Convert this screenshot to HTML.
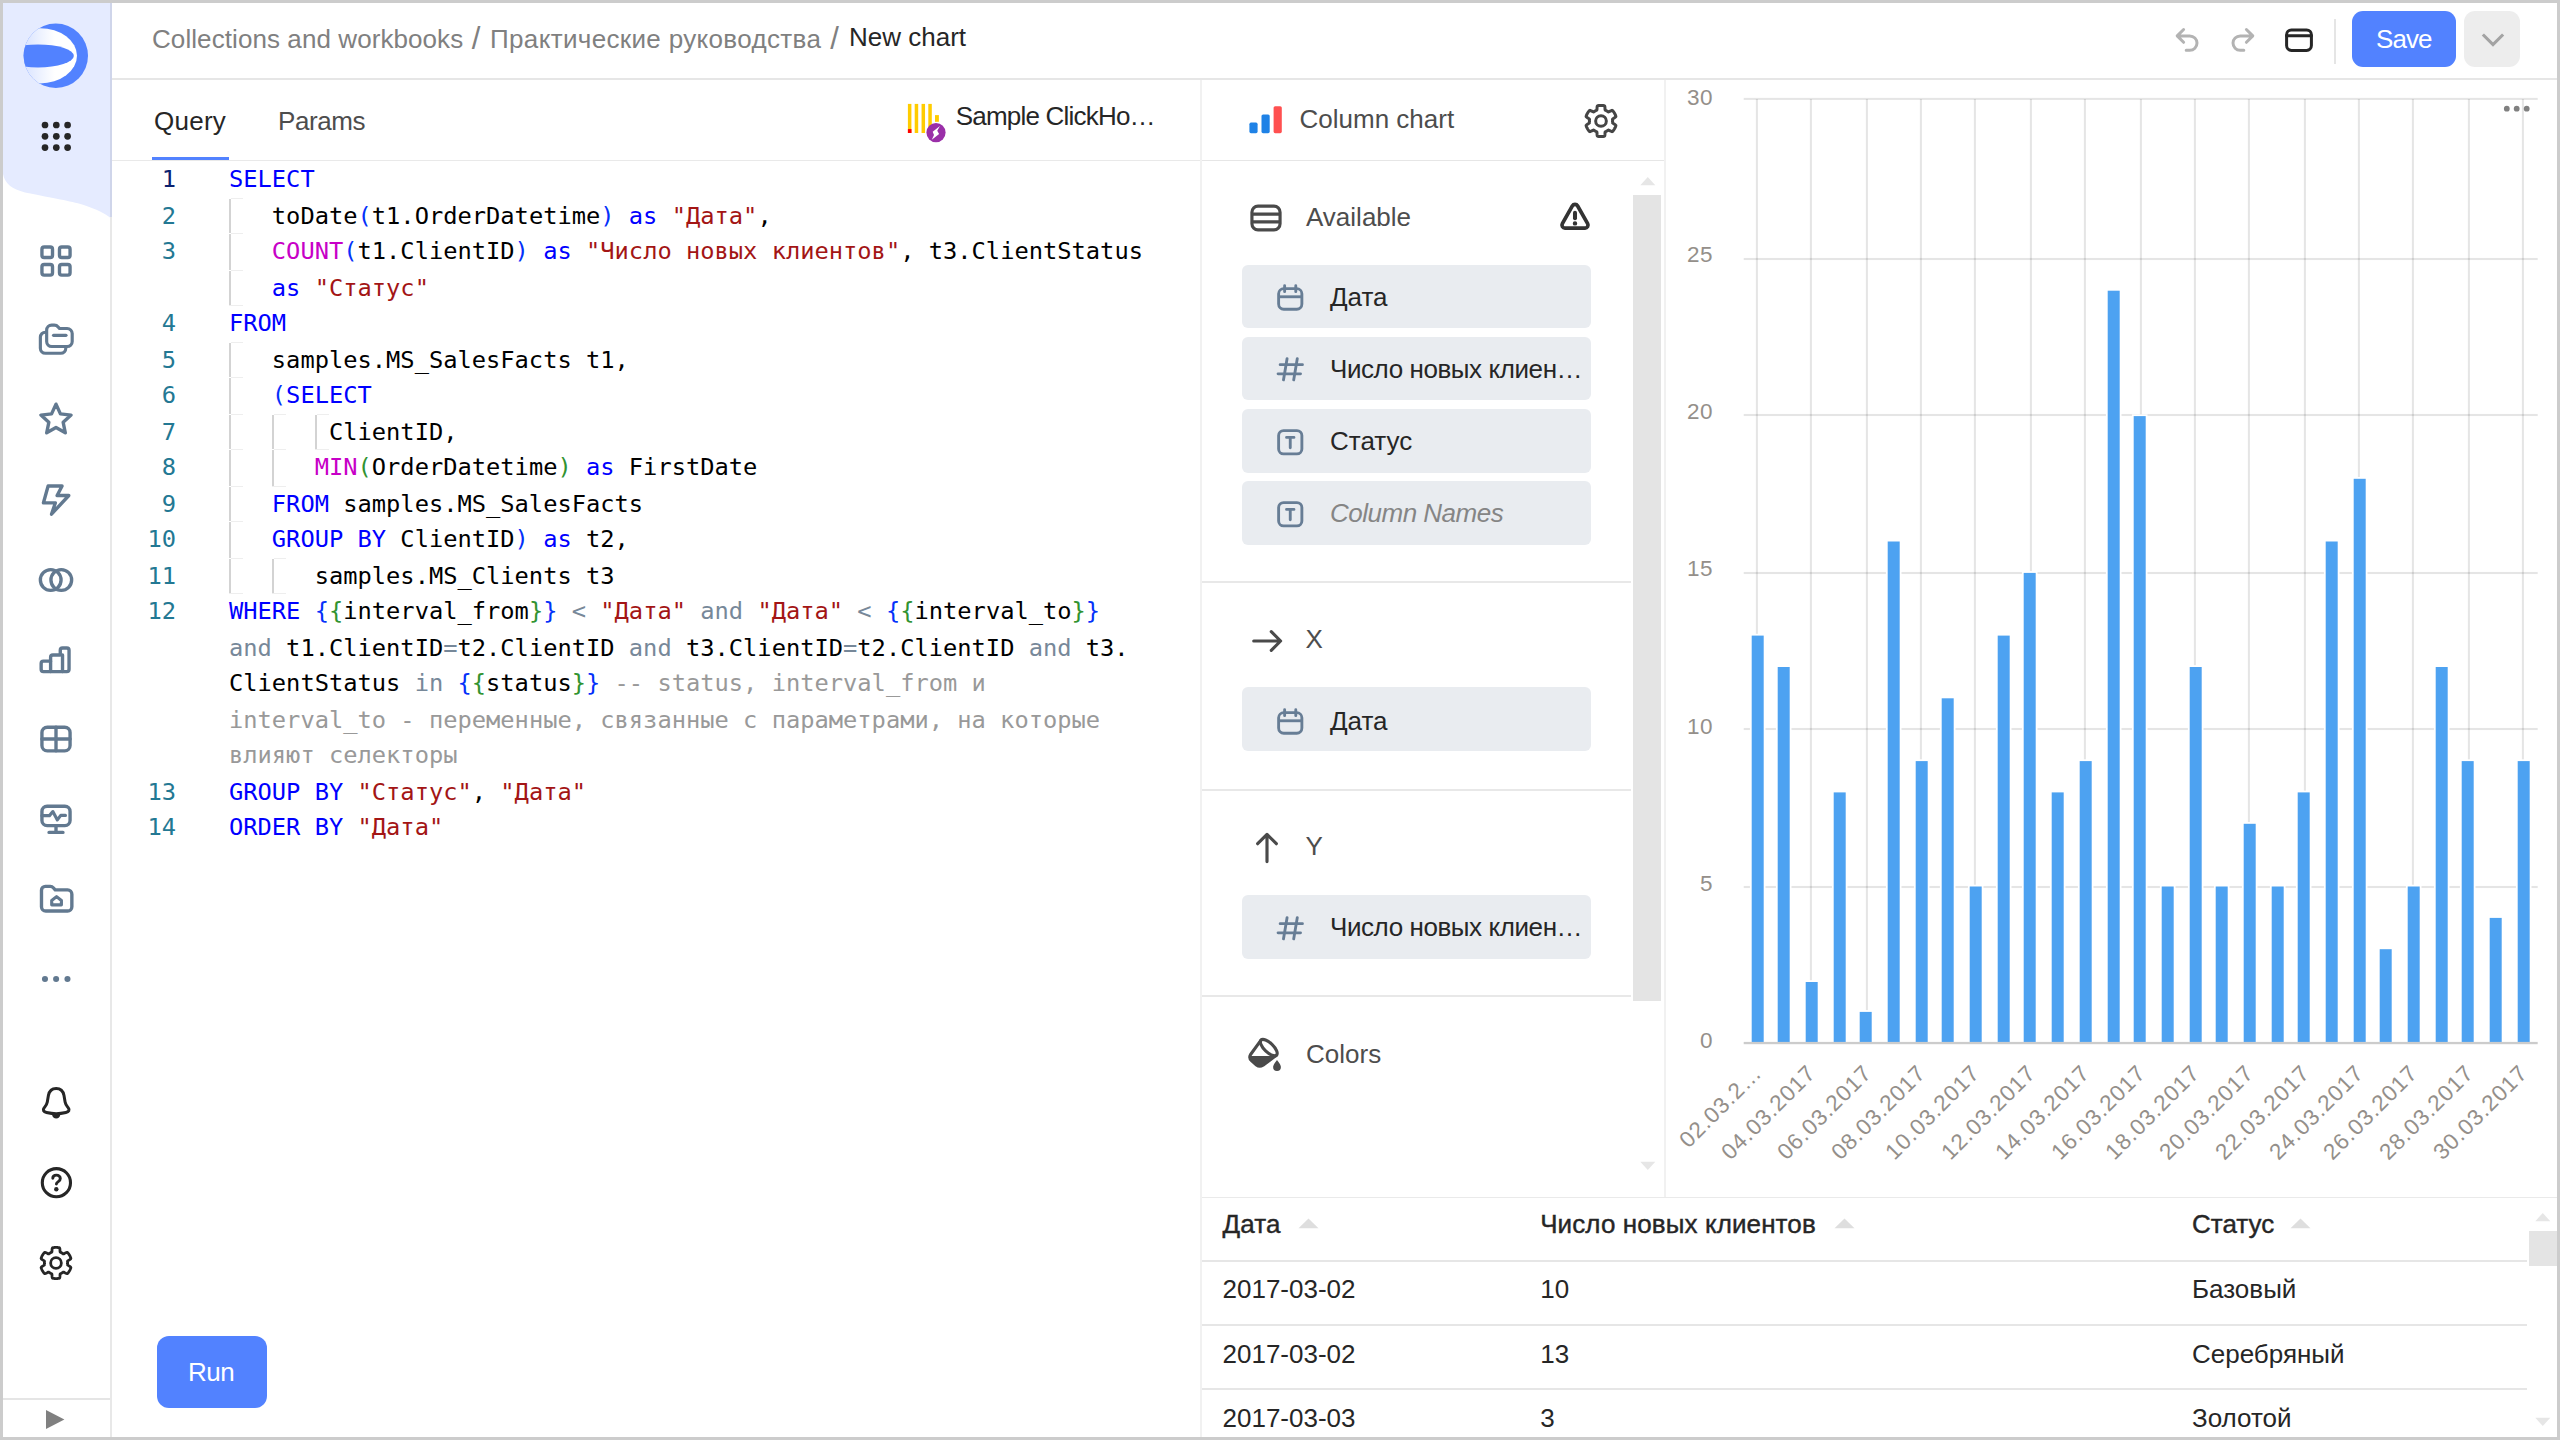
<!DOCTYPE html>
<html lang="ru"><head><meta charset="utf-8"><title>New chart</title>
<style>
html,body{margin:0;padding:0;}
body{width:2560px;height:1440px;overflow:hidden;background:#ccc;position:relative;font-family:"Liberation Sans", sans-serif;}
#app{position:absolute;left:3px;top:3px;width:2554px;height:1434px;background:#fff;overflow:hidden;}
#root{position:absolute;left:-3px;top:-3px;width:2560px;height:1440px;}
.t{position:absolute;white-space:pre;line-height:1;}
.b{position:absolute;}
.code{position:absolute;white-space:pre;font-family:"DejaVu Sans Mono", "Liberation Mono", monospace;font-size:23.72px;line-height:36px;height:36px;color:#000;}
.k{color:#0000ff}.s{color:#a31515}.f{color:#c700c7}.o{color:#778899}.c{color:#999999}.b1{color:#0431fa}.b2{color:#319331}
.ln{position:absolute;font-family:"DejaVu Sans Mono", "Liberation Mono", monospace;font-size:23.72px;line-height:36px;height:36px;color:#237893;text-align:right;width:60px;left:116px;}
.ig{position:absolute;width:1.9px;background:#d3d3d3;}
</style></head><body><div id="app"><div id="root">
<svg class="b" style="left:0;top:0" width="115" height="240" viewBox="0 0 115 240"><path d="M3,3 H112 V219 C105,213.5 97,209.5 83,204.8 C70,200.800 55,198.500 25,192.500 C12,189 5,184 3,174 Z" fill="#e5ebff"/><path d="M110,3 H112 V219 C111.3,218.5 110.700,218 110,217.500 Z" fill="#cfd5ea"/></svg>
<div class="b" style="left:110px;top:217px;width:2px;height:1220px;background:#e8e8e8;"></div>
<svg class="b" style="left:20px;top:20px" width="72" height="72" viewBox="20 20 72 72"><defs><linearGradient id="lg" x1="0" x2="1" y1="0" y2="0"><stop offset="0.25" stop-color="#d6e1ff"/><stop offset="0.7" stop-color="#ffffff"/></linearGradient><clipPath id="lc"><circle cx="55.8" cy="55.8" r="32.2"/></clipPath></defs><circle cx="55.8" cy="55.8" r="32.2" fill="#5282ff"/><g clip-path="url(#lc)"><ellipse cx="40" cy="55.8" rx="37" ry="27.6" fill="url(#lg)"/><ellipse cx="38" cy="55.9" rx="35.8" ry="11.5" fill="#5282ff"/></g></svg>
<svg class="b" style="left:30px;top:110px" width="52" height="52" viewBox="30 110 52 52" fill="#262626"><circle cx="45.0" cy="125.0" r="3.35"/><circle cx="45.0" cy="136.3" r="3.35"/><circle cx="45.0" cy="147.6" r="3.35"/><circle cx="56.3" cy="125.0" r="3.35"/><circle cx="56.3" cy="136.3" r="3.35"/><circle cx="56.3" cy="147.6" r="3.35"/><circle cx="67.6" cy="125.0" r="3.35"/><circle cx="67.6" cy="136.3" r="3.35"/><circle cx="67.6" cy="147.6" r="3.35"/></svg>
<svg class="b" style="left:38.0px;top:242.5px" width="36" height="36" viewBox="0 0 16 16" fill="none" stroke="#627990" stroke-width="1.5" stroke-linecap="round" stroke-linejoin="round"><rect x="1.75" y="1.75" width="4.7" height="4.7" rx="1"/><rect x="9.55" y="1.75" width="4.7" height="4.7" rx="1"/><rect x="1.75" y="9.55" width="4.7" height="4.7" rx="1"/><rect x="9.55" y="9.55" width="4.7" height="4.7" rx="1"/></svg>
<svg class="b" style="left:38.0px;top:322.3px" width="36" height="36" viewBox="0 0 16 16" fill="none" stroke="#627990" stroke-width="1.4" stroke-linecap="round" stroke-linejoin="round"><path d="M3.85 4.6V3.6a2.2 2.2 0 0 1 2.2-2.2h1.2a2.2 2.2 0 0 1 1.7.8l.6.7h3.4a2.25 2.25 0 0 1 2.25 2.25v3.5a2.25 2.25 0 0 1-2.25 2.25H6.1a2.25 2.25 0 0 1-2.25-2.25Z"/><path d="M3.7 4.55H3.3a2.25 2.25 0 0 0-2.25 2.25v4.85a2.25 2.25 0 0 0 2.25 2.25h6.8a2.25 2.25 0 0 0 2.25-2.25V11"/><path d="M6.9 5.92H12.45"/></svg>
<svg class="b" style="left:38.0px;top:402.1px" width="36" height="36" viewBox="0 0 16 16" fill="none" stroke="#627990" stroke-width="1.5" stroke-linecap="round" stroke-linejoin="round"><polygon points="8.00,0.95 9.97,5.29 14.70,5.82 11.19,9.04 12.14,13.70 8.00,11.35 3.86,13.70 4.81,9.04 1.30,5.82 6.03,5.29"/></svg>
<svg class="b" style="left:38.0px;top:481.9px" width="36" height="36" viewBox="0 0 16 16" fill="none" stroke="#627990" stroke-width="1.5" stroke-linecap="round" stroke-linejoin="round"><path d="M4.5 1.75h6.2L8.5 6h5.2L6 14.3l1.7-5H2.4Z"/></svg>
<svg class="b" style="left:38.0px;top:561.7px" width="36" height="36" viewBox="0 0 16 16" fill="none" stroke="#627990" stroke-width="1.5" stroke-linecap="round" stroke-linejoin="round"><circle cx="5.65" cy="8" r="4.6"/><circle cx="10.35" cy="8" r="4.6"/></svg>
<svg class="b" style="left:38.0px;top:641.5px" width="36" height="36" viewBox="0 0 16 16" fill="none" stroke="#627990" stroke-width="1.5" stroke-linecap="round" stroke-linejoin="round"><path d="M1.4 9.5a1 1 0 0 1 1-1h3.2V6.75a1 1 0 0 1 1-1h3.3V3.65a1 1 0 0 1 1-1h1.9a1 1 0 0 1 1 1v8.5a1 1 0 0 1-1 1H2.4a1 1 0 0 1-1-1Z"/><path d="M5.6 8.5v4.65M10.9 5.75v7.4"/></svg>
<svg class="b" style="left:38.0px;top:721.3px" width="36" height="36" viewBox="0 0 16 16" fill="none" stroke="#627990" stroke-width="1.5" stroke-linecap="round" stroke-linejoin="round"><rect x="1.75" y="2.75" width="12.5" height="10.5" rx="2.4"/><path d="M8 2.75v10.5M1.75 8h12.5"/></svg>
<svg class="b" style="left:38.0px;top:801.1px" width="36" height="36" viewBox="0 0 16 16" fill="none" stroke="#627990" stroke-width="1.5" stroke-linecap="round" stroke-linejoin="round"><rect x="1.75" y="2.35" width="12.5" height="8.600" rx="2.300"/><path d="M8 10.950v3M4.900 13.950h6.200"/><path d="M1.75 6.500H5.100L6.600 4.700 8.600 8.400 10.100 6.400H12.200" stroke-width="1.4"/></svg>
<svg class="b" style="left:38.0px;top:880.9px" width="36" height="36" viewBox="0 0 16 16" fill="none" stroke="#627990" stroke-width="1.5" stroke-linecap="round" stroke-linejoin="round"><path d="M1.55 4.15a1.75 1.75 0 0 1 1.75-1.75h2.2a1.75 1.75 0 0 1 1.3.6l.85.95h5.500a1.900 1.900 0 0 1 1.900 1.900v5.600a1.900 1.900 0 0 1-1.900 1.900H3.450a1.900 1.900 0 0 1-1.900-1.900Z"/><path d="M6.100 10.600V8.700l2.150-1.750 2.150 1.750v1.900Z" stroke-width="1.4"/></svg>
<svg class="b" style="left:38px;top:960.6999999999999px" width="36" height="36" viewBox="0 0 16 16" fill="#627990"><circle cx="3.1" cy="8" r="1.35"/><circle cx="8.05" cy="8" r="1.35"/><circle cx="13.1" cy="8" r="1.35"/></svg>
<svg class="b" style="left:26px;top:1073px" width="60" height="60" viewBox="26 1073 60 60"><path d="M56.2 1088.6 C51.5 1088.6 49.2 1091.5 48.4 1095.5 L47.3 1102 C46.8 1104.8 45.6 1106 44.2 1107.8 C42.4 1110 43.6 1111.8 46.5 1112.5 C50 1113.3 53 1113.7 56.2 1113.7 C59.4 1113.7 62.4 1113.3 65.9 1112.5 C68.8 1111.8 70 1110 68.2 1107.8 C66.8 1106 65.6 1104.8 65.100 1102 L64 1095.5 C63.2 1091.5 60.9 1088.6 56.2 1088.6 Z" fill="none" stroke="#262626" stroke-width="3" stroke-linejoin="round"/><path d="M52 1114.4 H60.4 C60 1117 58.4 1118.5 56.2 1118.5 C54 1118.5 52.4 1117 52 1114.4Z" fill="#262626"/></svg>
<svg class="b" style="left:26px;top:1153px" width="60" height="60" viewBox="26 1153 60 60" fill="none" stroke="#262626" stroke-linecap="round" stroke-linejoin="round"><circle cx="56.4" cy="1182.7" r="14.1" stroke-width="3.1"/><path d="M52.8 1178.3 C52.8 1176.3 54.4 1175.1 56.4 1175.1 C58.6 1175.1 60.3 1176.5 60.3 1178.5 C60.3 1180 59.5 1180.8 58.3 1181.6 C57.1 1182.4 56.4 1183 56.4 1184.1" stroke-width="2.9"/><circle cx="56.3" cy="1189.3" r="2.2" fill="#262626" stroke="none"/></svg>
<svg class="b" style="left:36.0px;top:1242.8px" width="40" height="40" viewBox="36.0 1242.8 40 40" fill="none" stroke="#262626" stroke-width="2.8" stroke-linejoin="round"><path d="M67.60 1262.80 L67.60 1263.00 L67.59 1263.20 L67.58 1263.41 L67.57 1263.61 L67.56 1263.81 L67.54 1264.01 L67.51 1264.21 L67.49 1264.41 L67.54 1264.63 L67.77 1264.88 L68.15 1265.16 L68.66 1265.49 L69.23 1265.86 L69.82 1266.24 L70.33 1266.64 L70.71 1267.02 L70.88 1267.35 L70.84 1267.62 L70.75 1267.88 L70.66 1268.14 L70.56 1268.39 L70.46 1268.64 L70.36 1268.90 L70.25 1269.15 L70.14 1269.39 L70.02 1269.64 L69.90 1269.88 L69.77 1270.12 L69.64 1270.36 L69.51 1270.60 L69.37 1270.83 L69.23 1271.07 L69.08 1271.30 L68.93 1271.52 L68.78 1271.75 L68.62 1271.97 L68.46 1272.19 L68.29 1272.40 L68.12 1272.62 L67.95 1272.83 L67.77 1273.03 L67.59 1273.24 L67.38 1273.41 L67.01 1273.43 L66.49 1273.29 L65.89 1273.04 L65.26 1272.73 L64.66 1272.42 L64.12 1272.14 L63.68 1271.96 L63.36 1271.88 L63.14 1271.94 L62.98 1272.06 L62.82 1272.18 L62.65 1272.30 L62.49 1272.42 L62.32 1272.53 L62.15 1272.64 L61.97 1272.74 L61.80 1272.85 L61.62 1272.95 L61.45 1273.04 L61.27 1273.14 L61.09 1273.23 L60.90 1273.31 L60.72 1273.40 L60.53 1273.48 L60.35 1273.56 L60.19 1273.71 L60.09 1274.03 L60.03 1274.51 L60.00 1275.11 L59.97 1275.79 L59.92 1276.49 L59.84 1277.13 L59.70 1277.65 L59.50 1277.96 L59.24 1278.06 L58.98 1278.11 L58.71 1278.16 L58.44 1278.21 L58.17 1278.25 L57.90 1278.28 L57.63 1278.31 L57.36 1278.34 L57.09 1278.36 L56.82 1278.38 L56.54 1278.39 L56.27 1278.40 L56.00 1278.40 L55.73 1278.40 L55.46 1278.39 L55.18 1278.38 L54.91 1278.36 L54.64 1278.34 L54.37 1278.31 L54.10 1278.28 L53.83 1278.25 L53.56 1278.21 L53.29 1278.16 L53.02 1278.11 L52.76 1278.06 L52.50 1277.96 L52.30 1277.65 L52.16 1277.13 L52.08 1276.49 L52.03 1275.79 L52.00 1275.11 L51.97 1274.51 L51.91 1274.03 L51.81 1273.71 L51.65 1273.56 L51.47 1273.48 L51.28 1273.40 L51.10 1273.31 L50.91 1273.23 L50.73 1273.14 L50.55 1273.04 L50.38 1272.95 L50.20 1272.85 L50.03 1272.74 L49.85 1272.64 L49.68 1272.53 L49.51 1272.42 L49.35 1272.30 L49.18 1272.18 L49.02 1272.06 L48.86 1271.94 L48.64 1271.88 L48.32 1271.96 L47.88 1272.14 L47.34 1272.42 L46.74 1272.73 L46.11 1273.04 L45.51 1273.29 L44.99 1273.43 L44.62 1273.41 L44.41 1273.24 L44.23 1273.03 L44.05 1272.83 L43.88 1272.62 L43.71 1272.40 L43.54 1272.19 L43.38 1271.97 L43.22 1271.75 L43.07 1271.52 L42.92 1271.30 L42.77 1271.07 L42.63 1270.83 L42.49 1270.60 L42.36 1270.36 L42.23 1270.12 L42.10 1269.88 L41.98 1269.64 L41.86 1269.39 L41.75 1269.15 L41.64 1268.90 L41.54 1268.64 L41.44 1268.39 L41.34 1268.14 L41.25 1267.88 L41.16 1267.62 L41.12 1267.35 L41.29 1267.02 L41.67 1266.64 L42.18 1266.24 L42.77 1265.86 L43.34 1265.49 L43.85 1265.16 L44.23 1264.88 L44.46 1264.63 L44.51 1264.41 L44.49 1264.21 L44.46 1264.01 L44.44 1263.81 L44.43 1263.61 L44.42 1263.41 L44.41 1263.20 L44.40 1263.00 L44.40 1262.80 L44.40 1262.60 L44.41 1262.40 L44.42 1262.19 L44.43 1261.99 L44.44 1261.79 L44.46 1261.59 L44.49 1261.39 L44.51 1261.19 L44.46 1260.97 L44.23 1260.72 L43.85 1260.44 L43.34 1260.11 L42.77 1259.74 L42.18 1259.36 L41.67 1258.96 L41.29 1258.58 L41.12 1258.25 L41.16 1257.98 L41.25 1257.72 L41.34 1257.46 L41.44 1257.21 L41.54 1256.96 L41.64 1256.70 L41.75 1256.45 L41.86 1256.21 L41.98 1255.96 L42.10 1255.72 L42.23 1255.48 L42.36 1255.24 L42.49 1255.00 L42.63 1254.77 L42.77 1254.53 L42.92 1254.30 L43.07 1254.08 L43.22 1253.85 L43.38 1253.63 L43.54 1253.41 L43.71 1253.20 L43.88 1252.98 L44.05 1252.77 L44.23 1252.57 L44.41 1252.36 L44.62 1252.19 L44.99 1252.17 L45.51 1252.31 L46.11 1252.56 L46.74 1252.87 L47.34 1253.18 L47.88 1253.46 L48.32 1253.64 L48.64 1253.72 L48.86 1253.66 L49.02 1253.54 L49.18 1253.42 L49.35 1253.30 L49.51 1253.18 L49.68 1253.07 L49.85 1252.96 L50.03 1252.86 L50.20 1252.75 L50.38 1252.65 L50.55 1252.56 L50.73 1252.46 L50.91 1252.37 L51.10 1252.29 L51.28 1252.20 L51.47 1252.12 L51.65 1252.04 L51.81 1251.89 L51.91 1251.57 L51.97 1251.09 L52.00 1250.49 L52.03 1249.81 L52.08 1249.11 L52.16 1248.47 L52.30 1247.95 L52.50 1247.64 L52.76 1247.54 L53.02 1247.49 L53.29 1247.44 L53.56 1247.39 L53.83 1247.35 L54.10 1247.32 L54.37 1247.29 L54.64 1247.26 L54.91 1247.24 L55.18 1247.22 L55.46 1247.21 L55.73 1247.20 L56.00 1247.20 L56.27 1247.20 L56.54 1247.21 L56.82 1247.22 L57.09 1247.24 L57.36 1247.26 L57.63 1247.29 L57.90 1247.32 L58.17 1247.35 L58.44 1247.39 L58.71 1247.44 L58.98 1247.49 L59.24 1247.54 L59.50 1247.64 L59.70 1247.95 L59.84 1248.47 L59.92 1249.11 L59.97 1249.81 L60.00 1250.49 L60.03 1251.09 L60.09 1251.57 L60.19 1251.89 L60.35 1252.04 L60.53 1252.12 L60.72 1252.20 L60.90 1252.29 L61.09 1252.37 L61.27 1252.46 L61.45 1252.56 L61.62 1252.65 L61.80 1252.75 L61.97 1252.86 L62.15 1252.96 L62.32 1253.07 L62.49 1253.18 L62.65 1253.30 L62.82 1253.42 L62.98 1253.54 L63.14 1253.66 L63.36 1253.72 L63.68 1253.64 L64.12 1253.46 L64.66 1253.18 L65.26 1252.87 L65.89 1252.56 L66.49 1252.31 L67.01 1252.17 L67.38 1252.19 L67.59 1252.36 L67.77 1252.57 L67.95 1252.77 L68.12 1252.98 L68.29 1253.20 L68.46 1253.41 L68.62 1253.63 L68.78 1253.85 L68.93 1254.08 L69.08 1254.30 L69.23 1254.53 L69.37 1254.77 L69.51 1255.00 L69.64 1255.24 L69.77 1255.48 L69.90 1255.72 L70.02 1255.96 L70.14 1256.21 L70.25 1256.45 L70.36 1256.70 L70.46 1256.96 L70.56 1257.21 L70.66 1257.46 L70.75 1257.72 L70.84 1257.98 L70.88 1258.25 L70.71 1258.58 L70.33 1258.96 L69.82 1259.36 L69.23 1259.74 L68.66 1260.11 L68.15 1260.44 L67.77 1260.72 L67.54 1260.97 L67.49 1261.19 L67.51 1261.39 L67.54 1261.59 L67.56 1261.79 L67.57 1261.99 L67.58 1262.19 L67.59 1262.40 L67.60 1262.60Z"/><circle cx="56.0" cy="1262.8" r="5.35"/></svg>
<div class="b" style="left:3px;top:1398.2px;width:107px;height:1.6px;background:#e5e5e5;"></div>
<svg class="b" style="left:44px;top:1407px" width="24" height="24" viewBox="0 0 24 24"><path d="M2 3L20.4 12.5 2 22Z" fill="#808080"/></svg>
<div class="b" style="left:112px;top:78px;width:2445px;height:2px;background:#e6e6e6;"></div>
<div class="t" style="left:152px;top:25.99px;font-size:26px;color:#808080;letter-spacing:0.08px;">Collections and workbooks</div>
<div class="t" style="left:471.7px;top:22.66px;font-size:31px;color:#808080;">/</div>
<div class="t" style="left:490px;top:25.99px;font-size:26px;color:#808080;letter-spacing:0.34px;">Практические руководства</div>
<div class="t" style="left:830.2px;top:22.66px;font-size:31px;color:#808080;">/</div>
<div class="t" style="left:849px;top:24.49px;font-size:26px;color:#262626;">New chart</div>
<svg class="b" style="left:2171px;top:23.7px;fill:none;stroke:#b3b3b3;stroke-width:1.5;stroke-linecap:round;stroke-linejoin:round" width="32" height="32" viewBox="0 0 16 16"><path d="M6.3 2.75 3.1 5.95l3.2 3.2M3.3 5.95h6.1a3.6 3.6 0 0 1 0 7.2H7.6"/></svg>
<svg class="b" style="left:2227.4px;top:23.7px;fill:none;stroke:#b3b3b3;stroke-width:1.5;stroke-linecap:round;stroke-linejoin:round" width="32" height="32" viewBox="0 0 16 16"><path d="M9.7 2.75l3.2 3.2-3.2 3.2M12.7 5.95H6.6a3.6 3.6 0 0 0 0 7.2h1.8"/></svg>
<svg class="b" style="left:2283.3px;top:23.85px;fill:none;stroke:#262626;stroke-width:1.5;stroke-linecap:round;stroke-linejoin:round" width="32" height="32" viewBox="0 0 16 16"><rect x="1.8" y="2.95" width="12.4" height="10.25" rx="2.4"/><path d="M1.8 5.9h12.4"/></svg>
<div class="b" style="left:2334px;top:19px;width:2px;height:45px;background:#e5e5e5;"></div>
<div class="b" style="left:2352px;top:11px;width:104px;height:56px;background:#5282ff;border-radius:11px"></div>
<div class="t" style="left:2376px;top:25.99px;font-size:26px;color:#fff;letter-spacing:-0.9px;">Save</div>
<div class="b" style="left:2464px;top:11px;width:56px;height:56px;background:#ededed;border-radius:11px"></div>
<svg class="b" style="left:2474.8px;top:21.1px;fill:none;stroke:#a3a3a3;stroke-width:1.4;stroke-linecap:butt;stroke-linejoin:miter" width="36" height="36" viewBox="0 0 16 16"><path d="M3.5 6 8 10.5 12.500 6"/></svg>
<div class="b" style="left:112px;top:159.9px;width:1088px;height:1.3px;background:#e9e9e9;"></div>
<div class="b" style="left:152px;top:157px;width:77px;height:3px;background:#5282ff;"></div>
<div class="t" style="left:154px;top:107.99px;font-size:26px;color:#262626;letter-spacing:0.25px;">Query</div>
<div class="t" style="left:278px;top:107.99px;font-size:26px;color:#4d4d4d;letter-spacing:-0.4px;">Params</div>
<svg class="b" style="left:900px;top:96px" width="56" height="52" viewBox="900 96 56 52"><rect x="907.9" y="103.900" width="3.500" height="29.100" fill="#ffcc00"/><rect x="914.7" y="103.900" width="3.500" height="29.100" fill="#ffcc00"/><rect x="921.55" y="103.900" width="3.500" height="29.100" fill="#ffcc00"/><rect x="928.3" y="103.900" width="3.500" height="29.100" fill="#ffcc00"/><rect x="907.9" y="129.100" width="3.600" height="3.900" fill="#ff0000"/><rect x="935" y="115.100" width="3.900" height="6.700" fill="#ffcc00"/><circle cx="936" cy="132.600" r="9.600" fill="#9a2fa8"/><path d="M939.96 125.96 L932.67 131.800 L934 135.100 L931.800 139.700 L939.100 133.900 L937.250 130.750Z" fill="#fff"/></svg>
<div class="t" style="left:955.8px;top:102.99px;font-size:26px;color:#262626;letter-spacing:-0.8px;">Sample ClickHo…</div>
<div class="b" style="left:1200px;top:80px;width:2px;height:1357px;background:#f1f1f1;"></div>
<div class="b" style="left:1664px;top:80px;width:2px;height:1116.5px;background:#f1f1f1;"></div>
<div class="ln" style="top:160.6px;color:#0b216f">1</div>
<div class="code" style="left:229.00px;top:160.6px"><span class="k">SELECT</span></div>
<div class="ln" style="top:197.6px">2</div>
<div class="code" style="left:271.84px;top:197.6px">toDate<span class="b1">(</span>t1.OrderDatetime<span class="b1">)</span> <span class="k">as</span> <span class="s">"Дата"</span>,</div>
<div class="ig" style="left:228.9px;top:198.5px;height:34.1px"></div>
<div class="b" style="left:230.8px;top:197.6px;width:12px;height:1px;background:#eeeeee"></div>
<div class="ln" style="top:232.6px">3</div>
<div class="code" style="left:271.84px;top:232.6px"><span class="f">COUNT</span><span class="b1">(</span>t1.ClientID<span class="b1">)</span> <span class="k">as</span> <span class="s">"Число новых клиентов"</span>, t3.ClientStatus</div>
<div class="ig" style="left:228.9px;top:233.5px;height:36.1px"></div>
<div class="b" style="left:230.8px;top:232.6px;width:12px;height:1px;background:#eeeeee"></div>
<div class="code" style="left:271.84px;top:269.6px"><span class="k">as</span> <span class="s">"Статус"</span></div>
<div class="ig" style="left:228.9px;top:270.5px;height:34.1px"></div>
<div class="b" style="left:230.8px;top:269.6px;width:12px;height:1px;background:#eeeeee"></div>
<div class="b" style="left:228.9px;top:304.6px;width:13.900px;height:1px;background:#eeeeee"></div>
<div class="ln" style="top:304.6px">4</div>
<div class="code" style="left:229.00px;top:304.6px"><span class="k">FROM</span></div>
<div class="ln" style="top:341.6px">5</div>
<div class="code" style="left:271.84px;top:341.6px">samples.MS_SalesFacts t1,</div>
<div class="ig" style="left:228.9px;top:342.5px;height:34.1px"></div>
<div class="b" style="left:230.8px;top:341.6px;width:12px;height:1px;background:#eeeeee"></div>
<div class="ln" style="top:376.6px">6</div>
<div class="code" style="left:271.84px;top:376.6px"><span class="b1">(</span><span class="k">SELECT</span></div>
<div class="ig" style="left:228.9px;top:377.5px;height:36.1px"></div>
<div class="b" style="left:230.8px;top:376.6px;width:12px;height:1px;background:#eeeeee"></div>
<div class="ln" style="top:413.6px">7</div>
<div class="code" style="left:328.96px;top:413.6px">ClientID,</div>
<div class="ig" style="left:228.9px;top:414.5px;height:34.1px"></div>
<div class="b" style="left:230.8px;top:413.6px;width:12px;height:1px;background:#eeeeee"></div>
<div class="ig" style="left:272.0px;top:414.5px;height:34.1px"></div>
<div class="b" style="left:273.9px;top:413.6px;width:12px;height:1px;background:#eeeeee"></div>
<div class="ig" style="left:315.1px;top:414.5px;height:34.1px"></div>
<div class="b" style="left:317.0px;top:413.6px;width:12px;height:1px;background:#eeeeee"></div>
<div class="b" style="left:315.1px;top:448.6px;width:13.900px;height:1px;background:#eeeeee"></div>
<div class="ln" style="top:448.6px">8</div>
<div class="code" style="left:314.68px;top:448.6px"><span class="f">MIN</span><span class="b2">(</span>OrderDatetime<span class="b2">)</span> <span class="k">as</span> FirstDate</div>
<div class="ig" style="left:228.9px;top:449.5px;height:36.1px"></div>
<div class="b" style="left:230.8px;top:448.6px;width:12px;height:1px;background:#eeeeee"></div>
<div class="ig" style="left:272.0px;top:449.5px;height:36.1px"></div>
<div class="b" style="left:273.9px;top:448.6px;width:12px;height:1px;background:#eeeeee"></div>
<div class="b" style="left:272.0px;top:485.6px;width:13.900px;height:1px;background:#eeeeee"></div>
<div class="ln" style="top:485.6px">9</div>
<div class="code" style="left:271.84px;top:485.6px"><span class="k">FROM</span> samples.MS_SalesFacts</div>
<div class="ig" style="left:228.9px;top:486.5px;height:34.1px"></div>
<div class="b" style="left:230.8px;top:485.6px;width:12px;height:1px;background:#eeeeee"></div>
<div class="ln" style="top:520.6px">10</div>
<div class="code" style="left:271.84px;top:520.6px"><span class="k">GROUP BY</span> ClientID<span class="b1">)</span> <span class="k">as</span> t2,</div>
<div class="ig" style="left:228.9px;top:521.5px;height:36.1px"></div>
<div class="b" style="left:230.8px;top:520.6px;width:12px;height:1px;background:#eeeeee"></div>
<div class="ln" style="top:557.6px">11</div>
<div class="code" style="left:314.68px;top:557.6px">samples.MS_Clients t3</div>
<div class="ig" style="left:228.9px;top:558.5px;height:34.1px"></div>
<div class="b" style="left:230.8px;top:557.6px;width:12px;height:1px;background:#eeeeee"></div>
<div class="b" style="left:228.9px;top:592.6px;width:13.900px;height:1px;background:#eeeeee"></div>
<div class="ig" style="left:272.0px;top:558.5px;height:34.1px"></div>
<div class="b" style="left:273.9px;top:557.6px;width:12px;height:1px;background:#eeeeee"></div>
<div class="b" style="left:272.0px;top:592.6px;width:13.900px;height:1px;background:#eeeeee"></div>
<div class="ln" style="top:592.6px">12</div>
<div class="code" style="left:229.00px;top:592.6px"><span class="k">WHERE</span> <span class="b1">{</span><span class="b2">{</span>interval_from<span class="b2">}</span><span class="b1">}</span> <span class="o">&lt;</span> <span class="s">"Дата"</span> <span class="o">and</span> <span class="s">"Дата"</span> <span class="o">&lt;</span> <span class="b1">{</span><span class="b2">{</span>interval_to<span class="b2">}</span><span class="b1">}</span></div>
<div class="code" style="left:229.00px;top:629.6px"><span class="o">and</span> t1.ClientID<span class="o">=</span>t2.ClientID <span class="o">and</span> t3.ClientID<span class="o">=</span>t2.ClientID <span class="o">and</span> t3.</div>
<div class="code" style="left:229.00px;top:664.6px">ClientStatus <span class="o">in</span> <span class="b1">{</span><span class="b2">{</span>status<span class="b2">}</span><span class="b1">}</span> <span class="c">-- status, interval_from и</span></div>
<div class="code" style="left:229.00px;top:701.6px"><span class="c">interval_to - переменные, связанные с параметрами, на которые</span></div>
<div class="code" style="left:229.00px;top:736.6px"><span class="c">влияют селекторы</span></div>
<div class="ln" style="top:773.6px">13</div>
<div class="code" style="left:229.00px;top:773.6px"><span class="k">GROUP BY</span> <span class="s">"Статус"</span>, <span class="s">"Дата"</span></div>
<div class="ln" style="top:808.6px">14</div>
<div class="code" style="left:229.00px;top:808.6px"><span class="k">ORDER BY</span> <span class="s">"Дата"</span></div>
<div class="b" style="left:157px;top:1336px;width:110px;height:72px;background:#5282ff;border-radius:12px"></div>
<div class="t" style="left:188px;top:1358.99px;font-size:26px;color:#fff;letter-spacing:-0.5px;">Run</div>
<svg class="b" style="left:1246px;top:100.4px" width="40" height="40" viewBox="1246 100 40 40"><rect x="1249.4" y="122.6" width="8.2" height="10.6" rx="1.6" fill="#1f82e6"/><rect x="1261.500" y="114.400" width="8.2" height="18.800" rx="1.6" fill="#1f82e6"/><rect x="1273.600" y="106.200" width="8.2" height="27" rx="1.6" fill="#ff5050"/></svg>
<div class="t" style="left:1299.5px;top:106.19px;font-size:26px;color:#4d4d4d;">Column chart</div>
<svg class="b" style="left:1580.6px;top:100.6px" width="40" height="40" viewBox="1580.6 100.6 40 40" fill="none" stroke="#454545" stroke-width="3.0" stroke-linejoin="round"><path d="M1612.20 120.60 L1612.20 120.80 L1612.19 121.00 L1612.18 121.21 L1612.17 121.41 L1612.16 121.61 L1612.14 121.81 L1612.11 122.01 L1612.09 122.21 L1612.14 122.43 L1612.37 122.68 L1612.75 122.96 L1613.26 123.29 L1613.83 123.66 L1614.42 124.04 L1614.93 124.44 L1615.31 124.82 L1615.48 125.15 L1615.44 125.42 L1615.35 125.68 L1615.26 125.94 L1615.16 126.19 L1615.06 126.44 L1614.96 126.70 L1614.85 126.95 L1614.74 127.19 L1614.62 127.44 L1614.50 127.68 L1614.37 127.92 L1614.24 128.16 L1614.11 128.40 L1613.97 128.63 L1613.83 128.87 L1613.68 129.10 L1613.53 129.32 L1613.38 129.55 L1613.22 129.77 L1613.06 129.99 L1612.89 130.20 L1612.72 130.42 L1612.55 130.63 L1612.37 130.83 L1612.19 131.04 L1611.98 131.21 L1611.61 131.23 L1611.09 131.09 L1610.49 130.84 L1609.86 130.53 L1609.26 130.22 L1608.72 129.94 L1608.28 129.76 L1607.96 129.68 L1607.74 129.74 L1607.58 129.86 L1607.42 129.98 L1607.25 130.10 L1607.09 130.22 L1606.92 130.33 L1606.75 130.44 L1606.57 130.54 L1606.40 130.65 L1606.22 130.75 L1606.05 130.84 L1605.87 130.94 L1605.69 131.03 L1605.50 131.11 L1605.32 131.20 L1605.13 131.28 L1604.95 131.36 L1604.79 131.51 L1604.69 131.83 L1604.63 132.31 L1604.60 132.91 L1604.57 133.59 L1604.52 134.29 L1604.44 134.93 L1604.30 135.45 L1604.10 135.76 L1603.84 135.86 L1603.58 135.91 L1603.31 135.96 L1603.04 136.01 L1602.77 136.05 L1602.50 136.08 L1602.23 136.11 L1601.96 136.14 L1601.69 136.16 L1601.42 136.18 L1601.14 136.19 L1600.87 136.20 L1600.60 136.20 L1600.33 136.20 L1600.06 136.19 L1599.78 136.18 L1599.51 136.16 L1599.24 136.14 L1598.97 136.11 L1598.70 136.08 L1598.43 136.05 L1598.16 136.01 L1597.89 135.96 L1597.62 135.91 L1597.36 135.86 L1597.10 135.76 L1596.90 135.45 L1596.76 134.93 L1596.68 134.29 L1596.63 133.59 L1596.60 132.91 L1596.57 132.31 L1596.51 131.83 L1596.41 131.51 L1596.25 131.36 L1596.07 131.28 L1595.88 131.20 L1595.70 131.11 L1595.51 131.03 L1595.33 130.94 L1595.15 130.84 L1594.98 130.75 L1594.80 130.65 L1594.63 130.54 L1594.45 130.44 L1594.28 130.33 L1594.11 130.22 L1593.95 130.10 L1593.78 129.98 L1593.62 129.86 L1593.46 129.74 L1593.24 129.68 L1592.92 129.76 L1592.48 129.94 L1591.94 130.22 L1591.34 130.53 L1590.71 130.84 L1590.11 131.09 L1589.59 131.23 L1589.22 131.21 L1589.01 131.04 L1588.83 130.83 L1588.65 130.63 L1588.48 130.42 L1588.31 130.20 L1588.14 129.99 L1587.98 129.77 L1587.82 129.55 L1587.67 129.32 L1587.52 129.10 L1587.37 128.87 L1587.23 128.63 L1587.09 128.40 L1586.96 128.16 L1586.83 127.92 L1586.70 127.68 L1586.58 127.44 L1586.46 127.19 L1586.35 126.95 L1586.24 126.70 L1586.14 126.44 L1586.04 126.19 L1585.94 125.94 L1585.85 125.68 L1585.76 125.42 L1585.72 125.15 L1585.89 124.82 L1586.27 124.44 L1586.78 124.04 L1587.37 123.66 L1587.94 123.29 L1588.45 122.96 L1588.83 122.68 L1589.06 122.43 L1589.11 122.21 L1589.09 122.01 L1589.06 121.81 L1589.04 121.61 L1589.03 121.41 L1589.02 121.21 L1589.01 121.00 L1589.00 120.80 L1589.00 120.60 L1589.00 120.40 L1589.01 120.20 L1589.02 119.99 L1589.03 119.79 L1589.04 119.59 L1589.06 119.39 L1589.09 119.19 L1589.11 118.99 L1589.06 118.77 L1588.83 118.52 L1588.45 118.24 L1587.94 117.91 L1587.37 117.54 L1586.78 117.16 L1586.27 116.76 L1585.89 116.38 L1585.72 116.05 L1585.76 115.78 L1585.85 115.52 L1585.94 115.26 L1586.04 115.01 L1586.14 114.76 L1586.24 114.50 L1586.35 114.25 L1586.46 114.01 L1586.58 113.76 L1586.70 113.52 L1586.83 113.28 L1586.96 113.04 L1587.09 112.80 L1587.23 112.57 L1587.37 112.33 L1587.52 112.10 L1587.67 111.88 L1587.82 111.65 L1587.98 111.43 L1588.14 111.21 L1588.31 111.00 L1588.48 110.78 L1588.65 110.57 L1588.83 110.37 L1589.01 110.16 L1589.22 109.99 L1589.59 109.97 L1590.11 110.11 L1590.71 110.36 L1591.34 110.67 L1591.94 110.98 L1592.48 111.26 L1592.92 111.44 L1593.24 111.52 L1593.46 111.46 L1593.62 111.34 L1593.78 111.22 L1593.95 111.10 L1594.11 110.98 L1594.28 110.87 L1594.45 110.76 L1594.63 110.66 L1594.80 110.55 L1594.98 110.45 L1595.15 110.36 L1595.33 110.26 L1595.51 110.17 L1595.70 110.09 L1595.88 110.00 L1596.07 109.92 L1596.25 109.84 L1596.41 109.69 L1596.51 109.37 L1596.57 108.89 L1596.60 108.29 L1596.63 107.61 L1596.68 106.91 L1596.76 106.27 L1596.90 105.75 L1597.10 105.44 L1597.36 105.34 L1597.62 105.29 L1597.89 105.24 L1598.16 105.19 L1598.43 105.15 L1598.70 105.12 L1598.97 105.09 L1599.24 105.06 L1599.51 105.04 L1599.78 105.02 L1600.06 105.01 L1600.33 105.00 L1600.60 105.00 L1600.87 105.00 L1601.14 105.01 L1601.42 105.02 L1601.69 105.04 L1601.96 105.06 L1602.23 105.09 L1602.50 105.12 L1602.77 105.15 L1603.04 105.19 L1603.31 105.24 L1603.58 105.29 L1603.84 105.34 L1604.10 105.44 L1604.30 105.75 L1604.44 106.27 L1604.52 106.91 L1604.57 107.61 L1604.60 108.29 L1604.63 108.89 L1604.69 109.37 L1604.79 109.69 L1604.95 109.84 L1605.13 109.92 L1605.32 110.00 L1605.50 110.09 L1605.69 110.17 L1605.87 110.26 L1606.05 110.36 L1606.22 110.45 L1606.40 110.55 L1606.57 110.66 L1606.75 110.76 L1606.92 110.87 L1607.09 110.98 L1607.25 111.10 L1607.42 111.22 L1607.58 111.34 L1607.74 111.46 L1607.96 111.52 L1608.28 111.44 L1608.72 111.26 L1609.26 110.98 L1609.86 110.67 L1610.49 110.36 L1611.09 110.11 L1611.61 109.97 L1611.98 109.99 L1612.19 110.16 L1612.37 110.37 L1612.55 110.57 L1612.72 110.78 L1612.89 111.00 L1613.06 111.21 L1613.22 111.43 L1613.38 111.65 L1613.53 111.88 L1613.68 112.10 L1613.83 112.33 L1613.97 112.57 L1614.11 112.80 L1614.24 113.04 L1614.37 113.28 L1614.50 113.52 L1614.62 113.76 L1614.74 114.01 L1614.85 114.25 L1614.96 114.50 L1615.06 114.76 L1615.16 115.01 L1615.26 115.26 L1615.35 115.52 L1615.44 115.78 L1615.48 116.05 L1615.31 116.38 L1614.93 116.76 L1614.42 117.16 L1613.83 117.54 L1613.26 117.91 L1612.75 118.24 L1612.37 118.52 L1612.14 118.77 L1612.09 118.99 L1612.11 119.19 L1612.14 119.39 L1612.16 119.59 L1612.17 119.79 L1612.18 119.99 L1612.19 120.20 L1612.20 120.40Z"/><circle cx="1600.6" cy="120.6" r="5.35"/></svg>
<div class="b" style="left:1202px;top:159.7px;width:461.5px;height:1.8px;background:#e6e6e6;"></div>
<svg class="b" style="left:1248.4px;top:200.35px" width="36" height="36" viewBox="0 0 16 16" fill="none" stroke="#4a4a4a" stroke-width="1.4" stroke-linecap="round" stroke-linejoin="round"><rect x="1.75" y="2.700" width="12.500" height="10.600" rx="2.700"/><path d="M1.75 6.250h12.500M1.75 9.750h12.500" stroke-linecap="butt"/></svg>
<div class="t" style="left:1306px;top:203.69px;font-size:26px;color:#4d4d4d;">Available</div>
<svg class="b" style="left:1558px;top:200px" width="34" height="34" viewBox="0 0 16 16" fill="none" stroke="#333" stroke-width="1.75" stroke-linejoin="round" stroke-linecap="round"><path d="M6.750 2.800a1.450 1.450 0 0 1 2.500 0l4.700 8.300a1.450 1.450 0 0 1-1.250 2.150H3.300a1.450 1.450 0 0 1-1.250-2.150Z"/><path d="M8 6v2.6" stroke-width="1.9"/><circle cx="8" cy="11" r=".5" fill="#333" stroke-width="1.1"/></svg>
<div class="b" style="left:1242.2px;top:264.5px;width:348.8px;height:63.7px;background:#e9ecf0;border-radius:6px"></div>
<svg class="b" style="left:1274.75px;top:282.25px" width="30.5" height="30.5" viewBox="0 0 16 16" fill="none" stroke="#677d95" stroke-width="1.5" stroke-linecap="round" stroke-linejoin="round"><rect x="1.9" y="3.500" width="12.2" height="10.800" rx="2.700"/><path d="M1.9 7.750h12.2" stroke-linecap="butt"/><path d="M5.050 1.950v3.100M10.900 1.950v3.100"/></svg>
<div class="t" style="left:1330px;top:283.89px;font-size:26px;color:#262626;">Дата</div>
<div class="b" style="left:1242.2px;top:336.7px;width:348.8px;height:63.7px;background:#e9ecf0;border-radius:6px"></div>
<svg class="b" style="left:1274.75px;top:354.45px" width="30.5" height="30.5" viewBox="0 0 16 16" fill="none" stroke="#677d95" stroke-width="1.5" stroke-linecap="round" stroke-linejoin="round"><path d="M6.350 2.400 4.450 13.600M11.700 2.400 9.800 13.600M2.700 5.600H14.400M1.600 10.400H13.400"/></svg>
<div class="t" style="left:1330px;top:356.09px;font-size:26px;color:#262626;letter-spacing:-0.42px;">Число новых клиен…</div>
<div class="b" style="left:1242.2px;top:408.9px;width:348.8px;height:63.7px;background:#e9ecf0;border-radius:6px"></div>
<svg class="b" style="left:1274.75px;top:426.65px" width="30.5" height="30.5" viewBox="0 0 16 16" fill="none" stroke="#677d95" stroke-width="1.5" stroke-linecap="round" stroke-linejoin="round"><rect x="1.9" y="1.9" width="12.2" height="12.2" rx="2.600"/><path d="M6.050 5.450h3.900M8 5.450v5.450"/></svg>
<div class="t" style="left:1330px;top:428.29px;font-size:26px;color:#262626;">Статус</div>
<div class="b" style="left:1242.2px;top:481.1px;width:348.8px;height:63.7px;background:#e9ecf0;border-radius:6px"></div>
<svg class="b" style="left:1274.75px;top:498.85px" width="30.5" height="30.5" viewBox="0 0 16 16" fill="none" stroke="#677d95" stroke-width="1.5" stroke-linecap="round" stroke-linejoin="round"><rect x="1.9" y="1.9" width="12.2" height="12.2" rx="2.600"/><path d="M6.050 5.450h3.900M8 5.450v5.450"/></svg>
<div class="t" style="left:1330px;top:500.49px;font-size:26px;color:#858585;letter-spacing:-0.5px;font-style:italic;">Column Names</div>
<div class="b" style="left:1202px;top:581px;width:429px;height:2px;background:#e8e8e8;"></div>
<svg class="b" style="left:1248.5px;top:622.8px" width="36" height="36" viewBox="0 0 16 16" fill="none" stroke="#4a4a4a" stroke-width="1.4" stroke-linecap="round" stroke-linejoin="round"><path d="M2.100 8h11.900M9.900 3.850 14.050 8l-4.150 4.150"/></svg>
<div class="t" style="left:1305.5px;top:625.99px;font-size:26px;color:#4d4d4d;">X</div>
<div class="b" style="left:1242.2px;top:687.2px;width:348.8px;height:63.7px;background:#e9ecf0;border-radius:6px"></div>
<svg class="b" style="left:1274.75px;top:706.35px" width="30.5" height="30.5" viewBox="0 0 16 16" fill="none" stroke="#677d95" stroke-width="1.5" stroke-linecap="round" stroke-linejoin="round"><rect x="1.9" y="3.500" width="12.2" height="10.800" rx="2.700"/><path d="M1.9 7.750h12.2" stroke-linecap="butt"/><path d="M5.050 1.950v3.100M10.900 1.950v3.100"/></svg>
<div class="t" style="left:1330px;top:707.99px;font-size:26px;color:#262626;">Дата</div>
<div class="b" style="left:1202px;top:788.5px;width:429px;height:2px;background:#e8e8e8;"></div>
<svg class="b" style="left:1248.7px;top:829.5px" width="36" height="36" viewBox="0 0 16 16" fill="none" stroke="#4a4a4a" stroke-width="1.4" stroke-linecap="round" stroke-linejoin="round"><path d="M8 14.050V2.000M3.850 6.100 8 1.950l4.150 4.150"/></svg>
<div class="t" style="left:1305.5px;top:832.99px;font-size:26px;color:#4d4d4d;">Y</div>
<div class="b" style="left:1242.2px;top:895.2px;width:348.8px;height:63.7px;background:#e9ecf0;border-radius:6px"></div>
<svg class="b" style="left:1274.75px;top:913.35px" width="30.5" height="30.5" viewBox="0 0 16 16" fill="none" stroke="#677d95" stroke-width="1.5" stroke-linecap="round" stroke-linejoin="round"><path d="M6.350 2.400 4.450 13.600M11.700 2.400 9.800 13.600M2.700 5.600H14.400M1.600 10.400H13.400"/></svg>
<div class="t" style="left:1330px;top:913.89px;font-size:26px;color:#262626;letter-spacing:-0.42px;">Число новых клиен…</div>
<div class="b" style="left:1202px;top:995px;width:429px;height:2px;background:#e8e8e8;"></div>
<svg class="b" style="left:1236px;top:1024px" width="64" height="60" viewBox="1236 1024 64 60"><g stroke="#4a4a4a" stroke-width="3.1" fill="none" stroke-linejoin="round" stroke-linecap="round"><ellipse cx="1268.8" cy="1047.6" rx="10.8" ry="4.6" transform="rotate(44 1268.8 1047.6)"/><path d="M1261.0 1040.1 L1250.6 1054.5 Q1248.6 1058 1251.5 1060.6 L1256.5 1065 Q1259.5 1067.3 1263 1065.2 L1276.6 1055.1"/></g><path d="M1249.8 1056.1 L1275.3 1056.1 L1263 1065.2 Q1259.5 1067.3 1256.5 1065 L1251.5 1060.6 Q1248.9 1058.3 1249.8 1056.1Z" fill="#4a4a4a"/><path d="M1277 1060 C1279.5 1063.2 1280.9 1065.3 1280.9 1067.1 a3.9 3.9 0 0 1 -7.8 0 C1273.1 1065.3 1274.5 1063.2 1277 1060Z" fill="#4a4a4a"/></svg>
<div class="t" style="left:1306px;top:1041.29px;font-size:26px;color:#4d4d4d;">Colors</div>
<div class="b" style="left:1633.4px;top:195px;width:27.7px;height:806px;background:#e4e4e4;"></div>
<svg class="b" style="left:1638px;top:175px" width="20" height="12" viewBox="0 0 20 12"><path d="M2.300 10.200 9.800 2l7.500 8.200Z" fill="#e6e6e6"/></svg>
<svg class="b" style="left:1638px;top:1160px" width="20" height="12" viewBox="0 0 20 12"><path d="M2.300 1.800 9.800 10l7.500-8.200Z" fill="#e6e6e6"/></svg>
<div class="b" style="left:1202px;top:1196.9px;width:1355px;height:1.3px;background:#eaeaea;"></div>
<div class="b" style="left:1202px;top:1259.9px;width:1325px;height:2px;background:#e6e6e6;"></div>
<div class="b" style="left:1202px;top:1324.3px;width:1325px;height:2px;background:#e6e6e6;"></div>
<div class="b" style="left:1202px;top:1388.1px;width:1325px;height:2px;background:#e6e6e6;"></div>
<div class="t" style="left:1222.5px;top:1210.69px;font-size:26px;color:#262626;letter-spacing:0.1px;-webkit-text-stroke:0.4px #262626;">Дата</div>
<svg class="b" style="left:1297.5px;top:1218.4px" width="21" height="11" viewBox="0 0 21 11"><path d="M0.500 10.300 10.500 0.600l10 9.700Z" fill="#dedede"/></svg>
<div class="t" style="left:1540.2px;top:1210.69px;font-size:26px;color:#262626;letter-spacing:0.1px;-webkit-text-stroke:0.4px #262626;">Число новых клиентов</div>
<svg class="b" style="left:1833.5px;top:1218.4px" width="21" height="11" viewBox="0 0 21 11"><path d="M0.500 10.300 10.500 0.600l10 9.700Z" fill="#dedede"/></svg>
<div class="t" style="left:2192px;top:1210.69px;font-size:26px;color:#262626;-webkit-text-stroke:0.4px #262626;">Статус</div>
<svg class="b" style="left:2289.5px;top:1218.4px" width="21" height="11" viewBox="0 0 21 11"><path d="M0.500 10.300 10.500 0.600l10 9.700Z" fill="#dedede"/></svg>
<div class="t" style="left:1222.5px;top:1276.49px;font-size:26px;color:#262626;">2017-03-02</div>
<div class="t" style="left:1540.2px;top:1276.49px;font-size:26px;color:#262626;">10</div>
<div class="t" style="left:2192px;top:1276.49px;font-size:26px;color:#262626;">Базовый</div>
<div class="t" style="left:1222.5px;top:1340.74px;font-size:26px;color:#262626;">2017-03-02</div>
<div class="t" style="left:1540.2px;top:1340.74px;font-size:26px;color:#262626;">13</div>
<div class="t" style="left:2192px;top:1340.74px;font-size:26px;color:#262626;">Серебряный</div>
<div class="t" style="left:1222.5px;top:1404.99px;font-size:26px;color:#262626;">2017-03-03</div>
<div class="t" style="left:1540.2px;top:1404.99px;font-size:26px;color:#262626;">3</div>
<div class="t" style="left:2192px;top:1404.99px;font-size:26px;color:#262626;">Золотой</div>
<div class="b" style="left:2529.2px;top:1231.1px;width:27.8px;height:34.7px;background:#e4e4e4;"></div>
<svg class="b" style="left:2533px;top:1211px" width="20" height="12" viewBox="0 0 20 12"><path d="M2.300 10.200 9.800 2l7.500 8.200Z" fill="#e6e6e6"/></svg>
<svg class="b" style="left:2533px;top:1416px" width="20" height="12" viewBox="0 0 20 12"><path d="M2.300 1.800 9.800 10l7.500-8.200Z" fill="#e6e6e6"/></svg>
<svg class="b" style="left:1666px;top:80px;font-family:'Liberation Sans',sans-serif" width="891" height="1116" viewBox="1666 80 891 1116"><rect x="1743.7" y="885.95" width="794.0" height="2.1" fill="rgba(0,0,0,0.1)"/><rect x="1743.7" y="727.95" width="794.0" height="2.1" fill="rgba(0,0,0,0.1)"/><rect x="1743.7" y="571.95" width="794.0" height="2.1" fill="rgba(0,0,0,0.1)"/><rect x="1743.7" y="413.95" width="794.0" height="2.1" fill="rgba(0,0,0,0.1)"/><rect x="1743.7" y="257.95" width="794.0" height="2.1" fill="rgba(0,0,0,0.1)"/><rect x="1743.7" y="97.85" width="794.0" height="2.1" fill="rgba(0,0,0,0.1)"/><rect x="1755.85" y="99" width="2.1" height="943.0" fill="rgba(0,0,0,0.1)"/><rect x="1809.85" y="99" width="2.1" height="943.0" fill="rgba(0,0,0,0.1)"/><rect x="1865.85" y="99" width="2.1" height="943.0" fill="rgba(0,0,0,0.1)"/><rect x="1919.85" y="99" width="2.1" height="943.0" fill="rgba(0,0,0,0.1)"/><rect x="1973.85" y="99" width="2.1" height="943.0" fill="rgba(0,0,0,0.1)"/><rect x="2029.85" y="99" width="2.1" height="943.0" fill="rgba(0,0,0,0.1)"/><rect x="2083.85" y="99" width="2.1" height="943.0" fill="rgba(0,0,0,0.1)"/><rect x="2139.85" y="99" width="2.1" height="943.0" fill="rgba(0,0,0,0.1)"/><rect x="2193.85" y="99" width="2.1" height="943.0" fill="rgba(0,0,0,0.1)"/><rect x="2247.85" y="99" width="2.1" height="943.0" fill="rgba(0,0,0,0.1)"/><rect x="2303.85" y="99" width="2.1" height="943.0" fill="rgba(0,0,0,0.1)"/><rect x="2357.85" y="99" width="2.1" height="943.0" fill="rgba(0,0,0,0.1)"/><rect x="2411.85" y="99" width="2.1" height="943.0" fill="rgba(0,0,0,0.1)"/><rect x="2467.85" y="99" width="2.1" height="943.0" fill="rgba(0,0,0,0.1)"/><rect x="2521.85" y="99" width="2.1" height="943.0" fill="rgba(0,0,0,0.1)"/><rect x="1749.9" y="633.8" width="15.6" height="408.2" fill="#fff"/><rect x="1751.7" y="635.6" width="12" height="406.4" fill="#4da2f1"/><rect x="1775.9" y="665.2" width="15.6" height="376.8" fill="#fff"/><rect x="1777.7" y="667.0" width="12" height="375.0" fill="#4da2f1"/><rect x="1803.9" y="980.2" width="15.6" height="61.8" fill="#fff"/><rect x="1805.7" y="982.0" width="12" height="60.0" fill="#4da2f1"/><rect x="1831.9" y="790.6" width="15.6" height="251.4" fill="#fff"/><rect x="1833.7" y="792.4" width="12" height="249.6" fill="#4da2f1"/><rect x="1857.9" y="1010.1" width="15.6" height="31.9" fill="#fff"/><rect x="1859.7" y="1011.9" width="12" height="30.1" fill="#4da2f1"/><rect x="1885.9" y="539.7" width="15.6" height="502.3" fill="#fff"/><rect x="1887.7" y="541.5" width="12" height="500.5" fill="#4da2f1"/><rect x="1913.9" y="759.3" width="15.6" height="282.7" fill="#fff"/><rect x="1915.7" y="761.1" width="12" height="280.9" fill="#4da2f1"/><rect x="1939.9" y="696.5" width="15.6" height="345.5" fill="#fff"/><rect x="1941.7" y="698.3" width="12" height="343.7" fill="#4da2f1"/><rect x="1967.9" y="884.7" width="15.6" height="157.3" fill="#fff"/><rect x="1969.7" y="886.5" width="12" height="155.5" fill="#4da2f1"/><rect x="1995.9" y="633.8" width="15.6" height="408.2" fill="#fff"/><rect x="1997.7" y="635.6" width="12" height="406.4" fill="#4da2f1"/><rect x="2021.9" y="571.1" width="15.6" height="470.9" fill="#fff"/><rect x="2023.7" y="572.9" width="12" height="469.1" fill="#4da2f1"/><rect x="2049.9" y="790.6" width="15.6" height="251.4" fill="#fff"/><rect x="2051.7" y="792.4" width="12" height="249.6" fill="#4da2f1"/><rect x="2077.9" y="759.3" width="15.6" height="282.7" fill="#fff"/><rect x="2079.7" y="761.1" width="12" height="280.9" fill="#4da2f1"/><rect x="2105.9" y="288.9" width="15.6" height="753.1" fill="#fff"/><rect x="2107.7" y="290.7" width="12" height="751.3" fill="#4da2f1"/><rect x="2131.9" y="414.3" width="15.6" height="627.7" fill="#fff"/><rect x="2133.7" y="416.1" width="12" height="625.9" fill="#4da2f1"/><rect x="2159.9" y="884.7" width="15.6" height="157.3" fill="#fff"/><rect x="2161.7" y="886.5" width="12" height="155.5" fill="#4da2f1"/><rect x="2187.9" y="665.2" width="15.6" height="376.8" fill="#fff"/><rect x="2189.7" y="667.0" width="12" height="375.0" fill="#4da2f1"/><rect x="2213.9" y="884.7" width="15.6" height="157.3" fill="#fff"/><rect x="2215.7" y="886.5" width="12" height="155.5" fill="#4da2f1"/><rect x="2241.9" y="822.0" width="15.6" height="220.0" fill="#fff"/><rect x="2243.7" y="823.8" width="12" height="218.2" fill="#4da2f1"/><rect x="2269.9" y="884.7" width="15.6" height="157.3" fill="#fff"/><rect x="2271.7" y="886.5" width="12" height="155.5" fill="#4da2f1"/><rect x="2295.9" y="790.6" width="15.6" height="251.4" fill="#fff"/><rect x="2297.7" y="792.4" width="12" height="249.6" fill="#4da2f1"/><rect x="2323.9" y="539.7" width="15.6" height="502.3" fill="#fff"/><rect x="2325.7" y="541.5" width="12" height="500.5" fill="#4da2f1"/><rect x="2351.9" y="477.0" width="15.6" height="565.0" fill="#fff"/><rect x="2353.7" y="478.8" width="12" height="563.2" fill="#4da2f1"/><rect x="2377.9" y="947.4" width="15.6" height="94.6" fill="#fff"/><rect x="2379.7" y="949.2" width="12" height="92.8" fill="#4da2f1"/><rect x="2405.9" y="884.7" width="15.6" height="157.3" fill="#fff"/><rect x="2407.7" y="886.5" width="12" height="155.5" fill="#4da2f1"/><rect x="2433.9" y="665.2" width="15.6" height="376.8" fill="#fff"/><rect x="2435.7" y="667.0" width="12" height="375.0" fill="#4da2f1"/><rect x="2459.9" y="759.3" width="15.6" height="282.7" fill="#fff"/><rect x="2461.7" y="761.1" width="12" height="280.9" fill="#4da2f1"/><rect x="2487.9" y="916.1" width="15.6" height="125.9" fill="#fff"/><rect x="2489.7" y="917.9" width="12" height="124.1" fill="#4da2f1"/><rect x="2515.9" y="759.3" width="15.6" height="282.7" fill="#fff"/><rect x="2517.7" y="761.1" width="12" height="280.9" fill="#4da2f1"/><rect x="1743.7" y="1041.9" width="794.0" height="2.3" fill="#cccccc"/><text x="1713.2" y="1048.0" text-anchor="end" font-size="22.5" fill="#948f8a" letter-spacing="0.6">0</text><text x="1713.2" y="890.8" text-anchor="end" font-size="22.5" fill="#948f8a" letter-spacing="0.6">5</text><text x="1713.2" y="733.6" text-anchor="end" font-size="22.5" fill="#948f8a" letter-spacing="0.6">10</text><text x="1713.2" y="576.4" text-anchor="end" font-size="22.5" fill="#948f8a" letter-spacing="0.6">15</text><text x="1713.2" y="419.2" text-anchor="end" font-size="22.5" fill="#948f8a" letter-spacing="0.6">20</text><text x="1713.2" y="262.0" text-anchor="end" font-size="22.5" fill="#948f8a" letter-spacing="0.6">25</text><text x="1713.2" y="104.8" text-anchor="end" font-size="22.5" fill="#948f8a" letter-spacing="0.6">30</text><text transform="translate(1763.1 1074.3) rotate(-45)" text-anchor="end" font-size="22.5" fill="#948f8a" letter-spacing="1">02.03.2…</text><text transform="translate(1817.1 1074.3) rotate(-45)" text-anchor="end" font-size="22.5" fill="#948f8a" letter-spacing="1">04.03.2017</text><text transform="translate(1873.1 1074.3) rotate(-45)" text-anchor="end" font-size="22.5" fill="#948f8a" letter-spacing="1">06.03.2017</text><text transform="translate(1927.1 1074.3) rotate(-45)" text-anchor="end" font-size="22.5" fill="#948f8a" letter-spacing="1">08.03.2017</text><text transform="translate(1981.1 1074.3) rotate(-45)" text-anchor="end" font-size="22.5" fill="#948f8a" letter-spacing="1">10.03.2017</text><text transform="translate(2037.1 1074.3) rotate(-45)" text-anchor="end" font-size="22.5" fill="#948f8a" letter-spacing="1">12.03.2017</text><text transform="translate(2091.1 1074.3) rotate(-45)" text-anchor="end" font-size="22.5" fill="#948f8a" letter-spacing="1">14.03.2017</text><text transform="translate(2147.1 1074.3) rotate(-45)" text-anchor="end" font-size="22.5" fill="#948f8a" letter-spacing="1">16.03.2017</text><text transform="translate(2201.1 1074.3) rotate(-45)" text-anchor="end" font-size="22.5" fill="#948f8a" letter-spacing="1">18.03.2017</text><text transform="translate(2255.1 1074.3) rotate(-45)" text-anchor="end" font-size="22.5" fill="#948f8a" letter-spacing="1">20.03.2017</text><text transform="translate(2311.1 1074.3) rotate(-45)" text-anchor="end" font-size="22.5" fill="#948f8a" letter-spacing="1">22.03.2017</text><text transform="translate(2365.1 1074.3) rotate(-45)" text-anchor="end" font-size="22.5" fill="#948f8a" letter-spacing="1">24.03.2017</text><text transform="translate(2419.1 1074.3) rotate(-45)" text-anchor="end" font-size="22.5" fill="#948f8a" letter-spacing="1">26.03.2017</text><text transform="translate(2475.1 1074.3) rotate(-45)" text-anchor="end" font-size="22.5" fill="#948f8a" letter-spacing="1">28.03.2017</text><text transform="translate(2529.1 1074.3) rotate(-45)" text-anchor="end" font-size="22.5" fill="#948f8a" letter-spacing="1">30.03.2017</text><circle cx="2506.8" cy="108.7" r="2.9" fill="#808080"/><circle cx="2516.7" cy="108.7" r="2.9" fill="#808080"/><circle cx="2526.7" cy="108.7" r="2.9" fill="#808080"/></svg>
</div></div></body></html>
